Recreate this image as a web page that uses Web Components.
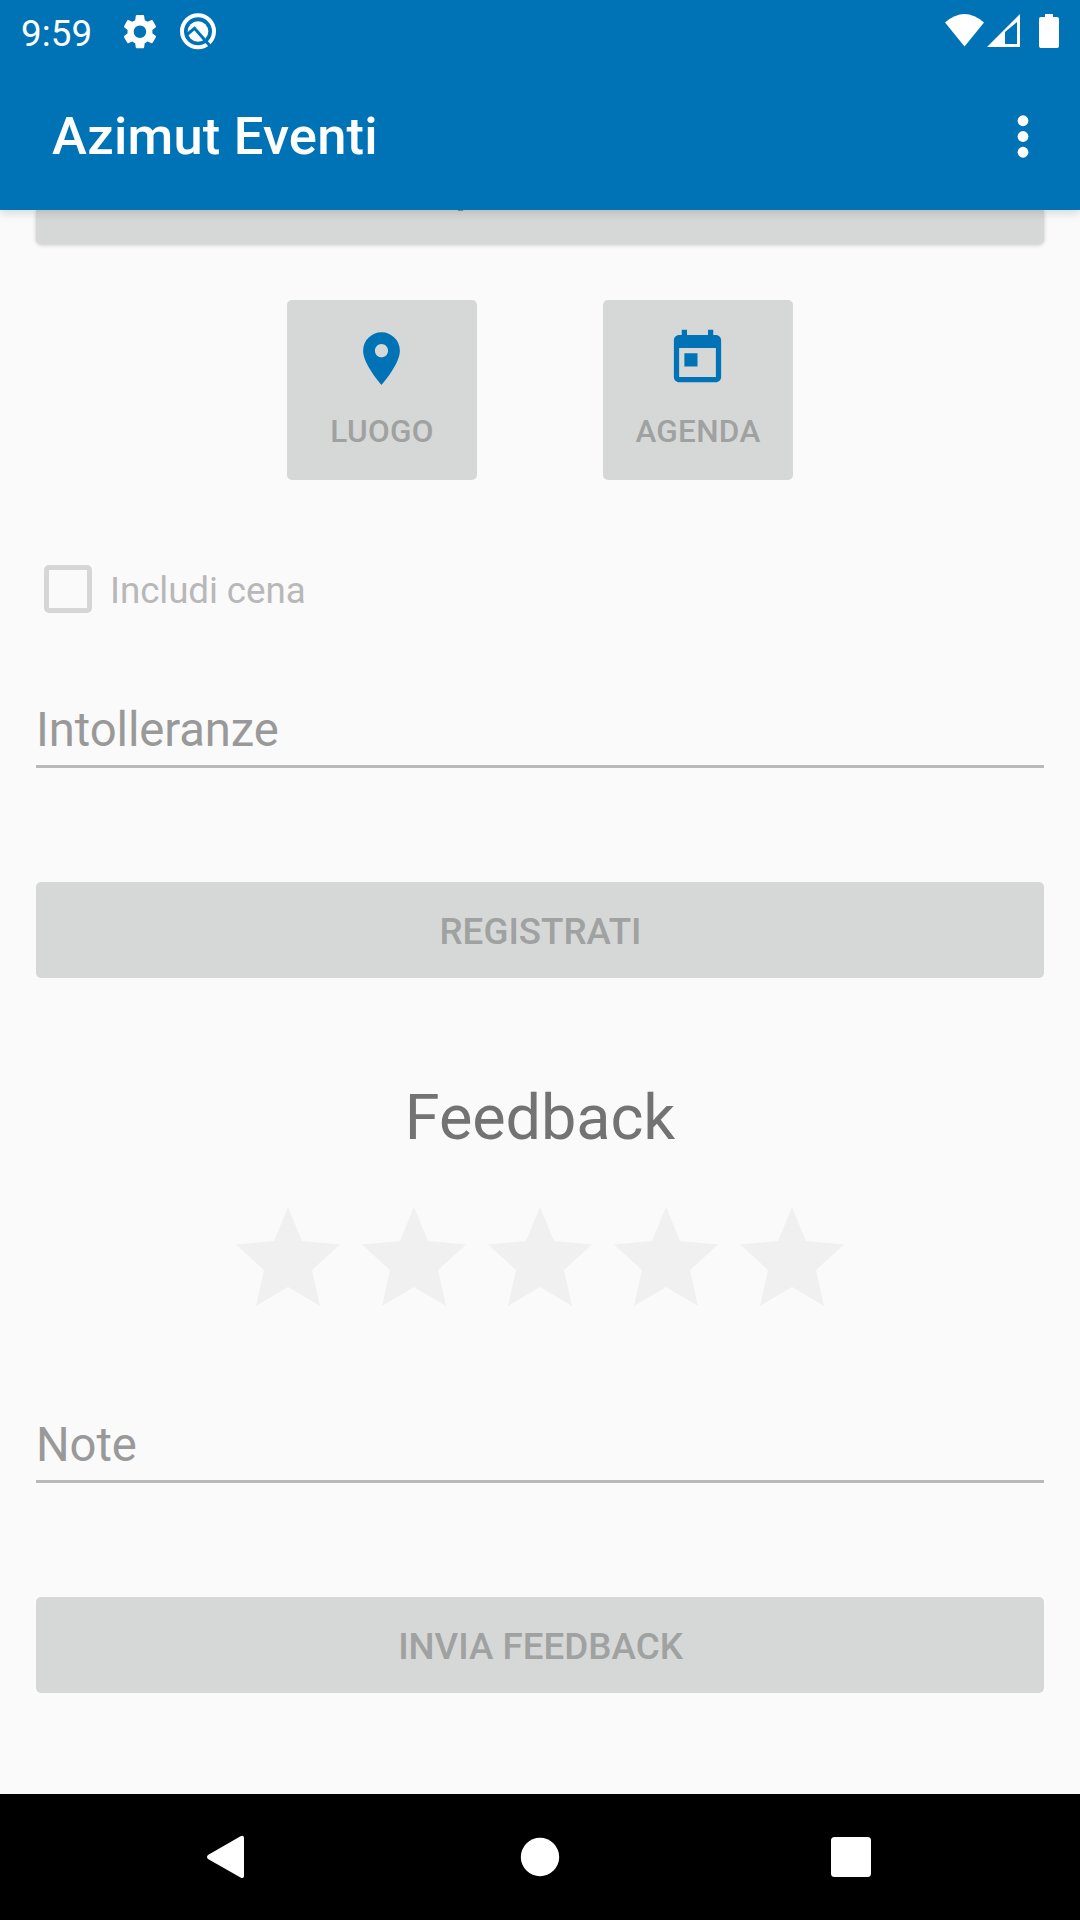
<!DOCTYPE html>
<html lang="it">
<head>
<meta charset="utf-8">
<title>Azimut Eventi</title>
<style>
html,body{margin:0;padding:0}
body{width:1080px;height:1920px;overflow:hidden;font-family:Roboto,sans-serif;background:#fafafa}
</style>
</head>
<body>
<event-screen></event-screen>
<script>
const define=(name,html)=>customElements.define(name,class extends HTMLElement{
  constructor(){super();const t=document.createElement('template');t.innerHTML=html;
    this.attachShadow({mode:'open'}).appendChild(t.content.cloneNode(true));}
});

define('status-bar',`<style>
:host{display:flex;height:63px;box-sizing:border-box;background:#0073b7;color:#fff;align-items:flex-start}
.time{font-size:36.75px;line-height:44px;margin:12px 0 0 21px;width:103px;letter-spacing:.1px}
svg{display:block;flex:none;fill:#fff}
.gap{flex:1}
</style>
<span class="time">9:59</span>
<svg width="100" height="63" viewBox="124 0 100 63">
<path transform="translate(119.2 10.9) scale(1.73)" d="M19.14 12.94c.04-.3.06-.61.06-.94 0-.32-.02-.64-.07-.94l2.03-1.58c.18-.14.23-.41.12-.61l-1.92-3.32c-.12-.22-.37-.29-.59-.22l-2.39.96c-.5-.38-1.03-.7-1.62-.94l-.36-2.54c-.04-.24-.24-.41-.48-.41h-3.84c-.24 0-.43.17-.47.41l-.36 2.54c-.59.24-1.13.57-1.62.94l-2.39-.96c-.22-.08-.47 0-.59.22L2.74 8.87c-.12.21-.08.47.12.61l2.03 1.58c-.05.3-.09.63-.09.94s.02.64.07.94l-2.03 1.58c-.18.14-.23.41-.12.61l1.92 3.32c.12.22.37.29.59.22l2.39-.96c.5.38 1.03.7 1.62.94l.36 2.54c.05.24.24.41.48.41h3.84c.24 0 .44-.17.47-.41l.36-2.54c.59-.24 1.13-.56 1.62-.94l2.39.96c.22.08.47 0 .59-.22l1.92-3.32c.12-.22.07-.47-.12-.61l-2.01-1.58zM12 15.6c-1.98 0-3.6-1.62-3.6-3.6s1.62-3.6 3.6-3.6 3.6 1.62 3.6 3.6-1.62 3.6-3.6 3.6z"/>
<circle cx="198" cy="31.300" r="16" fill="none" stroke="#fff" stroke-width="4"/>
<circle cx="198" cy="31.500" r="10.300"/>
<path d="M186.500 35L194.500 28.300L210.500 46.500" fill="none" stroke="#0073b7" stroke-width="3"/>
</svg>
<span class="gap"></span>
<svg width="135" height="63" viewBox="945 0 135 63">
<path d="M945 22.500Q964.500 5.500 984 22.500L964.500 46.500Z"/>
<path fill-rule="evenodd" d="M987 47L1020 14V47ZM1005 32V44H1017V22Z"/>
<path d="M1045 14h8v3h4q2 0 2 2v27q0 2-2 2h-16q-2 0-2-2v-27q0-2 2-2h4z"/>
</svg>`);

define('app-bar',`<style>
:host{display:flex;align-items:center;justify-content:space-between;height:147px;background:#0073b7;color:#fff}
.title{font-size:52.500px;font-weight:500;line-height:62px;margin:-2px 0 0 52px;letter-spacing:.2px}
svg{display:block;fill:#fff;margin-right:41.500px}
</style>
<span class="title"><slot></slot></span>
<svg width="32" height="63" viewBox="0 0 32 63"><circle cx="16" cy="15.750" r="5.400"/><circle cx="16" cy="31.500" r="5.400"/><circle cx="16" cy="47.250" r="5.400"/></svg>`);

define('app-header',`<style>
:host{display:block;position:relative;z-index:1;box-shadow:0 3px 9px rgba(0,0,0,.14)}
</style><status-bar></status-bar><app-bar><slot></slot></app-bar>`);

define('flat-button',`<style>
:host{display:flex;align-items:center;justify-content:center;height:96px;border-radius:5px;background:#d6d8d7;color:#a0a1a1;font-size:36.750px;font-weight:500}
span{line-height:44px;margin:3px 0 0 1px}
</style><span><slot></slot></span>`);

define('icon-tile',`<style>
:host{display:flex;flex-direction:column;align-items:center;width:190px;height:180px;border-radius:5px;background:#d6d8d7;color:#a0a1a1;font-size:31.500px;font-weight:500}
::slotted(svg){display:block;width:63px;height:63px;fill:#0073b7;margin:27px 1px 0 0}
span{line-height:38px;margin-top:23px;letter-spacing:.3px}
</style><slot name="icon"></slot><span><slot></slot></span>`);

define('check-row',`<style>
:host{display:flex;align-items:center;height:84px;color:#b8b8b8;font-size:36.750px}
i{box-sizing:border-box;width:48px;height:48px;border:5px solid #d6d6d6;border-radius:5px;margin-left:8px}
span{line-height:44px;margin:4px 0 0 18px;letter-spacing:-.08px}
</style><i></i><span><slot></slot></span>`);

define('text-field',`<style>
:host{display:block;box-sizing:border-box;height:70px;border-bottom:3px solid #b9b9b9;color:#999;font-size:47.250px;line-height:56px;letter-spacing:-.1px}
span{display:block;padding-top:4px}
</style><span><slot></slot></span>`);

define('star-icon',`<style>:host{display:block;width:126px;height:110px}svg{display:block}</style>
<svg width="126" height="110" viewBox="225 1200 126 110"><path fill="#f0f0f0" d="M288 1207L302 1241L340 1244.500L312 1270L320 1306L288 1287L256 1306L264 1270L236 1244.500L274 1241Z"/></svg>`);

define('star-rating',`<style>:host{display:flex;justify-content:center}</style>
<star-icon></star-icon><star-icon></star-icon><star-icon></star-icon><star-icon></star-icon><star-icon></star-icon>`);

define('nav-bar',`<style>
:host{display:flex;align-items:center;justify-content:space-between;height:126px;box-sizing:border-box;padding:0 207px;background:#000}
svg{display:block;fill:#fff}
</style>
<svg width="44" height="44" viewBox="0 0 44 44"><path d="M1 20L33.500 1.200Q37 0 37 3V41Q37 44 33.500 42.500L1 24Q-1 22 1 20Z"/></svg>
<svg width="40" height="40" viewBox="0 0 40 40"><circle cx="20" cy="20" r="19.200"/></svg>
<svg width="44" height="40" viewBox="0 0 44 40"><rect x="2" width="40" height="40" rx="3.500"/></svg>`);

define('event-screen',`<style>
:host{display:flex;flex-direction:column;width:1080px;height:1920px;background:#fafafa}
main{flex:1;display:flex;flex-direction:column;padding:0 36px;overflow:hidden}
.top{flex:none;display:flex;height:34px;border-radius:0 0 5px 5px;background:#d6d8d7;box-shadow:0 1px 4px rgba(0,0,0,.2)}
.top i{width:5px;height:1px;margin-left:422px;background:#8d9090}
.tiles{display:flex;justify-content:center;gap:126px;margin-top:56px}
check-row{margin-top:67px}
.f1{margin-top:67px}
.b1,.b2{margin-top:114px}
h2{margin:103px 0 0;font-size:63px;font-weight:400;line-height:74px;color:#737373;text-align:center;letter-spacing:-.1px}
star-rating{margin-top:45px}
.f2{margin-top:103px}
</style>
<app-header>Azimut Eventi</app-header>
<main>
<div class="top"><i></i></div>
<div class="tiles">
<icon-tile><svg slot="icon" viewBox="0 0 24 24"><path d="M12 2C8.130 2 5 5.130 5 9c0 5.250 7 13 7 13s7-7.750 7-13c0-3.870-3.130-7-7-7zm0 9.500c-1.380 0-2.500-1.120-2.500-2.500s1.120-2.500 2.500-2.500 2.500 1.120 2.500 2.500-1.120 2.500-2.500 2.500z"/></svg>LUOGO</icon-tile>
<icon-tile><svg slot="icon" viewBox="0 0 24 24"><path d="M19 3h-1V1h-2v2H8V1H6v2H5c-1.110 0-1.990.9-1.990 2L3 19c0 1.100.89 2 2 2h14c1.100 0 2-.9 2-2V5c0-1.100-.9-2-2-2zm0 16H5V8h14v11zM7 10h5v5H7z"/></svg>AGENDA</icon-tile>
</div>
<check-row>Includi cena</check-row>
<text-field class="f1">Intolleranze</text-field>
<flat-button class="b1">REGISTRATI</flat-button>
<h2>Feedback</h2>
<star-rating></star-rating>
<text-field class="f2">Note</text-field>
<flat-button class="b2">INVIA FEEDBACK</flat-button>
</main>
<nav-bar></nav-bar>`);
</script>
</body>
</html>
